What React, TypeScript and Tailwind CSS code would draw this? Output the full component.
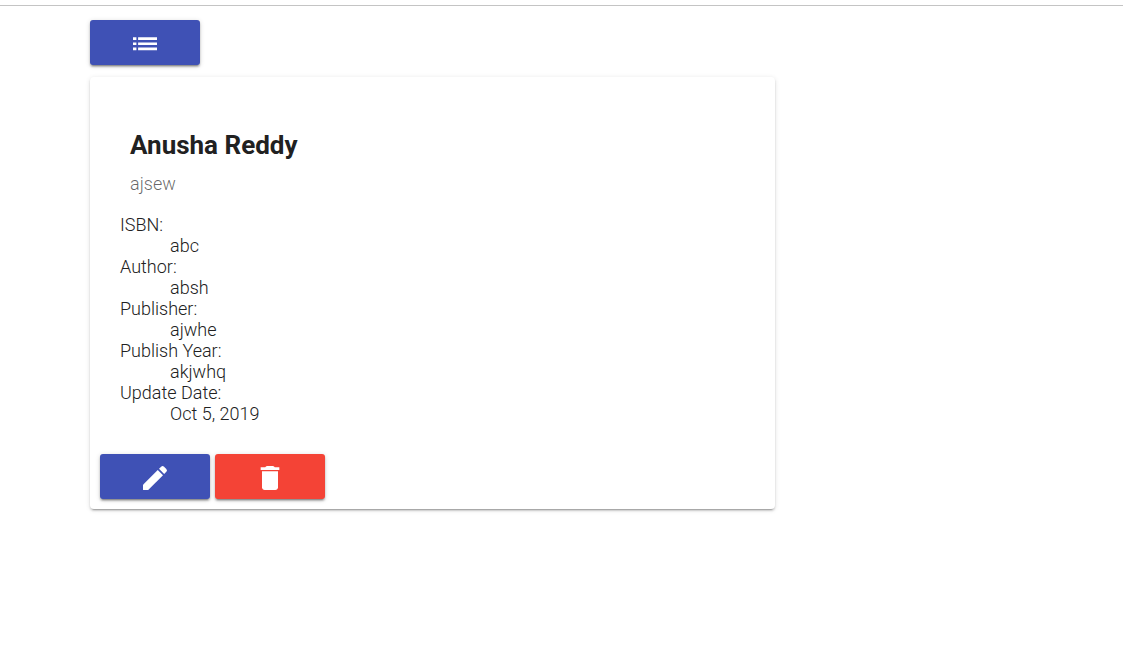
const details = [
  { term: "ISBN:", value: "abc" },
  { term: "Author:", value: "absh" },
  { term: "Publisher:", value: "ajwhe" },
  { term: "Publish Year:", value: "akjwhq" },
  { term: "Update Date:", value: "Oct 5, 2019" },
];

const raised =
  "flex h-[45px] w-[110px] items-center justify-center rounded-[3px] pt-[2px] text-white shadow-[0_3px_1px_-2px_rgba(0,0,0,0.2),0_2px_2px_0_rgba(0,0,0,0.24),0_1px_5px_0_rgba(0,0,0,0.16)]";

function ListIcon() {
  return (
    <svg width="32" height="32" viewBox="0 0 32 32" fill="currentColor" aria-hidden="true">
      <path d="M4 9.2h3.4v2.7H4zM4 14.4h3.4v2.7H4zM4 19.6h3.4v2.7H4zM9.1 9.2H28v2.7H9.1zM9.1 14.4H28v2.7H9.1zM9.1 19.6H28v2.7H9.1z" />
    </svg>
  );
}

function PencilIcon() {
  return (
    <svg width="32" height="32" viewBox="0 0 24 24" fill="currentColor" aria-hidden="true">
      <path d="M3 17.1V20.6q0 .4.4.4H6.9L18 9.95 14.05 6z" />
      <path d="M20.5 7.4q1-1.1 0-2.2L18.8 3.5q-1.1-1-2.2 0L15 5.1 18.9 9z" />
    </svg>
  );
}

function TrashIcon() {
  return (
    <svg width="32" height="32" viewBox="0 0 24 24" fill="currentColor" aria-hidden="true">
      <path d="M6 19c0 1.1.9 2 2 2h8c1.1 0 2-.9 2-2V7H6z" />
      <path d="M19 4h-3.4l-.6-.7q-.3-.3-.7-.3H9.7q-.4 0-.7.3l-.6.7H5v2h14z" />
    </svg>
  );
}

export default function App() {
  return (
    <div className="min-h-screen bg-white pt-[5px] font-['Roboto',sans-serif] text-[#212121]">
      <div className="border-t border-[#c4c4c4] pt-[14px] pr-[348px] pl-[90px]">
        <a href="#books" aria-label="List of books" className={`${raised} bg-[#3f51b5]`}>
          <ListIcon />
        </a>
        <main className="mt-3 rounded-[4px] bg-white p-[10px] shadow-[0_3px_1px_-2px_rgba(0,0,0,0.2),0_2px_2px_0_rgba(0,0,0,0.14),0_1px_5px_0_rgba(0,0,0,0.12)]">
          <header className="px-[30px] pt-[42px]">
            <h2 className="text-[26px] leading-8 font-bold">Anusha Reddy</h2>
            <p className="mt-3 text-[18px] leading-[21px] font-light text-black/60">ajsew</p>
          </header>
          <dl className="mt-5 px-5 text-[18px] leading-[21px] font-light">
            {details.map(({ term, value }) => (
              <div key={term}>
                <dt>{term}</dt>
                <dd className="ml-[50px]">{value}</dd>
              </div>
            ))}
          </dl>
          <div className="mt-[30px] flex gap-[5px]">
            <a href="#edit" aria-label="Edit book" className={`${raised} bg-[#3f51b5]`}>
              <PencilIcon />
            </a>
            <button type="button" aria-label="Delete book" className={`${raised} bg-[#f44336]`}>
              <TrashIcon />
            </button>
          </div>
        </main>
      </div>
    </div>
  );
}
